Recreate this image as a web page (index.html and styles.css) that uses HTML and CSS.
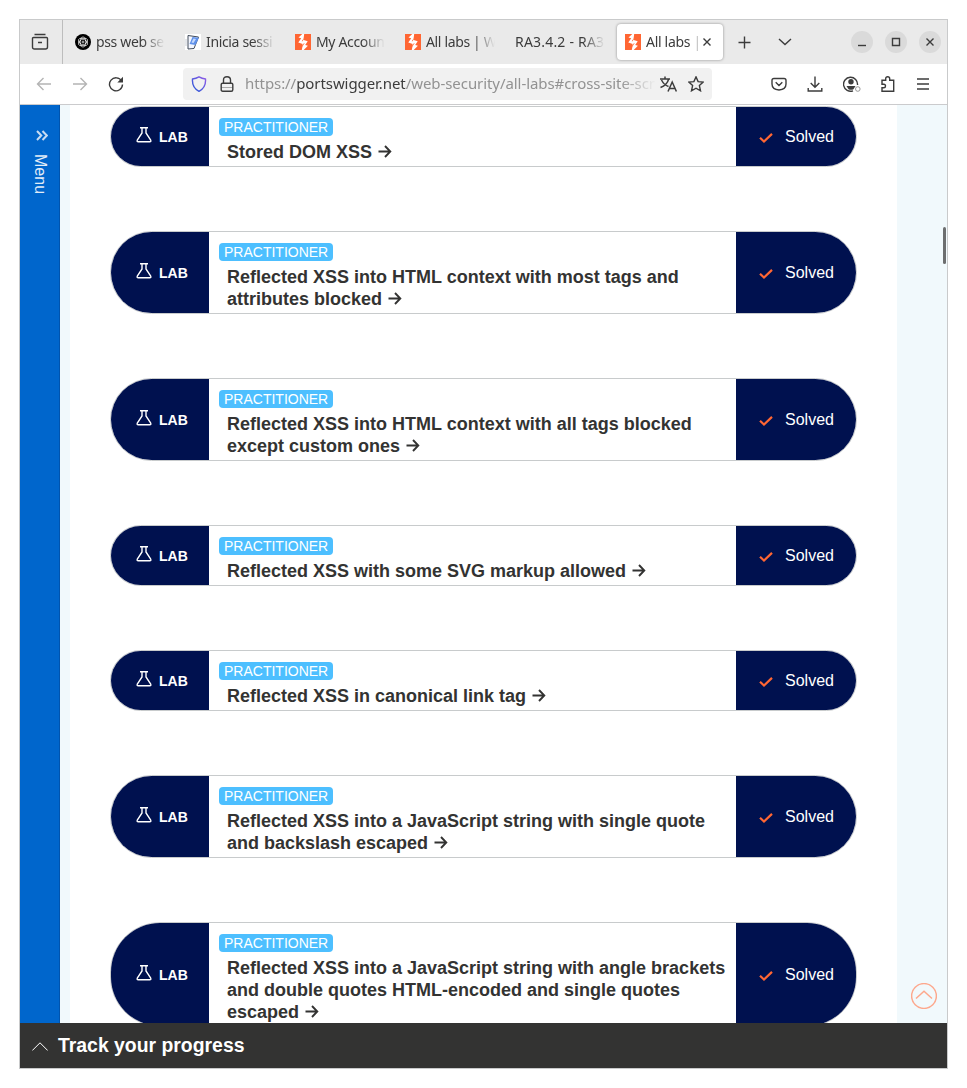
FILE: index.html
```html
<!DOCTYPE html>
<html lang="en">
<head>
<meta charset="utf-8">
<title>All labs | Web Security Academy</title>
<link rel="stylesheet" href="styles.css">
</head>
<body>
<svg class="sprite" aria-hidden="true">
  <symbol id="bolt" viewBox="0 0 16 16"><path fill="#ff6633" d="M0 0h16v16H0z"/><path fill="#fff" d="M7.300 0H9.200L8.600 4.400 6.700 7.300 9.600 8.200 6.900 12 7.700 9.900 3.300 8.600 6.200 4.200 3.500 3.600zM8.700 16H6.800l.6-3.200 2.200-3.700L7 8.200l2.200-3.800-.5 1.700 4 1.200-2.500 3.700 2.700.7z"/></symbol>
  <symbol id="flask" viewBox="0 0 16 16"><path d="M4 .8h8M6 .8v5.200L1.300 13.200q-.7 1.600 1 1.600h11.400q1.700 0 1-1.600L10 6V.8" fill="none" stroke="currentColor" stroke-width="1.400"/></symbol>
  <symbol id="check" viewBox="0 0 14 12"><path d="M1 5.800 5 9.600 13 1.900" fill="none" stroke="currentColor" stroke-width="2.200"/></symbol>
  <symbol id="arrow" viewBox="0 0 14 14"><path d="M.5 6.500H12M7 1 12.300 6.500 7 12" fill="none" stroke="currentColor" stroke-width="1.900"/></symbol>
</svg>
<div class="window">
  <header class="tabbar">
    <div class="view"><svg width="18" height="18" viewBox="0 0 18 18"><path d="M3.500 1.500h11M2.500 4.500h13q1 0 1 1v8.500q0 2-2 2h-11q-2 0-2-2V5.500q0-1 1-1zM7 9.500h4"/></svg></div>
    <nav class="tabs">
      <div class="tab"><svg class="fav" viewBox="0 0 16 16"><circle cx="8" cy="8" r="8" fill="#000"/><g fill="none" stroke="#fff" stroke-width=".7"><ellipse cx="8" cy="8" rx="2.800" ry="5"/><ellipse cx="8" cy="8" rx="2.800" ry="5" transform="rotate(60 8 8)"/><ellipse cx="8" cy="8" rx="2.800" ry="5" transform="rotate(120 8 8)"/><circle cx="8" cy="8" r="1"/></g></svg><span class="label">pss web se</span></div>
      <div class="tab"><svg class="fav" viewBox="0 0 16 16"><path fill="#fff" d="M0 0h16v16H0z"/><path d="M3 1.500 13.500 3 9 14.500 3 15z" fill="#f4f7ff" stroke="#414b5a" stroke-width="1"/><path d="M7.500 3 14 3.800 10.500 11 4.500 10z" fill="#5f91ea"/><path d="M8.500 4.500 11 5 8.500 9 6.500 8.500z" fill="#c6dafd"/><path d="M1 5v7" stroke="#c9ced6"/></svg><span class="label">Inicia sessi</span></div>
      <div class="tab"><svg class="fav"><use href="#bolt"/></svg><span class="label">My Accoun</span></div>
      <div class="tab"><svg class="fav"><use href="#bolt"/></svg><span class="label">All labs | W</span></div>
      <div class="tab wide"><span class="label">RA3.4.2 - RA3</span></div>
      <div class="tab active"><svg class="fav"><use href="#bolt"/></svg><span class="label">All labs |</span><svg class="close" width="8" height="8" viewBox="0 0 8 8"><path d="m.5.5 7 7m0-7-7 7"/></svg></div>
    </nav>
    <svg class="plus" width="13" height="13" viewBox="0 0 13 13"><path d="M6.500.5v12M.5 6.500h12"/></svg>
    <svg class="down" width="14" height="8" viewBox="0 0 14 8"><path d="m1 1 6 5.500L13 1"/></svg>
    <div class="controls">
      <span><svg viewBox="0 0 22 22"><path d="M7 14.500h8"/></svg></span>
      <span><svg viewBox="0 0 22 22"><path d="M7.500 7.500h7v7h-7z"/></svg></span>
      <span><svg viewBox="0 0 22 22"><path d="m7.500 7.500 7 7m0-7-7 7"/></svg></span>
    </div>
  </header>
  <div class="toolbar">
    <div class="history">
      <svg class="dim" width="16" height="16" viewBox="0 0 16 16"><path d="M15 8H1.500m6-6-6 6 6 6"/></svg>
      <svg class="dim" width="16" height="16" viewBox="0 0 16 16"><path d="M1 8h13.500m-6-6 6 6-6 6"/></svg>
      <svg width="16" height="16" viewBox="0 0 16 16"><path d="M13.600 5A6.500 6.500 0 1 0 14.500 8.500"/><path d="M15 .8v5.700H9.300z" fill="#3c3c3c" stroke="none"/></svg>
    </div>
    <div class="urlbar">
      <svg width="16" height="16" viewBox="0 0 16 16"><defs><linearGradient id="sh" x1="0" y1="1" x2="1" y2="0"><stop stop-color="#2457d6"/><stop offset="1" stop-color="#925be8"/></linearGradient></defs><path stroke="url(#sh)" d="M8 .8Q11 2.500 14.500 3 15.200 11.500 8 15.300.8 11.500 1.500 3 5 2.500 8 .8z"/></svg>
      <svg class="lock" width="14" height="16" viewBox="0 0 14 16"><path d="M3.500 7V4q0-3.300 3.500-3.300T10.500 4v3M2.500 7.200h9q1.300 0 1.300 1.300v5.200q0 1.500-1.500 1.500H2.700q-1.500 0-1.500-1.500V8.500q0-1.300 1.300-1.300z"/><path class="hair" d="M1.500 11.500h11"/></svg>
      <div class="url">https://<b>portswigger.net</b>/web-security/all-labs#cross-site-scr</div>
      <svg width="17" height="16" viewBox="0 0 17 16"><path stroke-width="1.500" d="M0 3h10M5 .5V3M1.500 4Q4 9 8.500 10.500M8.500 3.500Q7 9 .5 11.500M8 15.500 12.200 6l4.200 9.500M9.500 12.500h5.500"/></svg>
      <svg class="star" width="16" height="16" viewBox="0 0 16 16"><path d="m8 .9 2.100 4.700 5.100.5-3.800 3.500 1.100 5.200L8 12.200l-4.500 2.600 1.100-5.200L.8 6.100l5.100-.5z"/></svg>
    </div>
    <div class="actions">
      <svg viewBox="0 0 16 16"><path d="M3 2.500h10q2 0 2 2V8q0 5.500-7 6-7-.5-7-6V4.500q0-2 2-2zM4.700 6.300 8 9.500l3.300-3.200"/></svg>
      <svg viewBox="0 0 16 16"><path d="M8 .5V11M3.700 7 8 11.200 12.300 7M1.200 12v3h13.600v-3"/></svg>
      <svg viewBox="0 0 18 16"><path d="M14.500 9a7 7 0 1 0-4.500 5.800"/><circle cx="8" cy="5.800" r="2.700" fill="#3c3c3c" stroke="none"/><path d="M3.500 10h9l-2 3.200q-2.500 1-5 0z" fill="#3c3c3c" stroke="none"/><circle cx="14.800" cy="13" r="2.300" stroke="#999" stroke-width="1"/></svg>
      <svg viewBox="0 0 16 16"><path d="M2 4.200h3.700V2.800q0-2 2-2t2 2v1.400h4v11H2v-3.400h1.800q1.700 0 1.700-1.800T3.800 8.200H2z"/></svg>
      <svg viewBox="0 0 16 16"><path d="M2 3h12M2 8h12M2 13h12"/></svg>
    </div>
  </div>
  <main class="page">
    <aside class="menu"><svg width="12" height="11" viewBox="0 0 12 11"><path d="m1 1 4.300 4.500L1 10m5.500-9 4.300 4.500L6.500 10"/></svg><span>Menu</span></aside>
    <section class="labs">
      <article class="lab"><div class="kind"><svg><use href="#flask"/></svg>LAB</div><div class="info"><span class="level">PRACTITIONER</span><h2>Stored DOM XSS <svg><use href="#arrow"/></svg></h2></div><div class="status"><svg><use href="#check"/></svg>Solved</div></article>
      <article class="lab"><div class="kind"><svg><use href="#flask"/></svg>LAB</div><div class="info"><span class="level">PRACTITIONER</span><h2>Reflected XSS into HTML context with most tags and<br>attributes blocked <svg><use href="#arrow"/></svg></h2></div><div class="status"><svg><use href="#check"/></svg>Solved</div></article>
      <article class="lab"><div class="kind"><svg><use href="#flask"/></svg>LAB</div><div class="info"><span class="level">PRACTITIONER</span><h2>Reflected XSS into HTML context with all tags blocked<br>except custom ones <svg><use href="#arrow"/></svg></h2></div><div class="status"><svg><use href="#check"/></svg>Solved</div></article>
      <article class="lab"><div class="kind"><svg><use href="#flask"/></svg>LAB</div><div class="info"><span class="level">PRACTITIONER</span><h2>Reflected XSS with some SVG markup allowed <svg><use href="#arrow"/></svg></h2></div><div class="status"><svg><use href="#check"/></svg>Solved</div></article>
      <article class="lab"><div class="kind"><svg><use href="#flask"/></svg>LAB</div><div class="info"><span class="level">PRACTITIONER</span><h2>Reflected XSS in canonical link tag <svg><use href="#arrow"/></svg></h2></div><div class="status"><svg><use href="#check"/></svg>Solved</div></article>
      <article class="lab"><div class="kind"><svg><use href="#flask"/></svg>LAB</div><div class="info"><span class="level">PRACTITIONER</span><h2>Reflected XSS into a JavaScript string with single quote<br>and backslash escaped <svg><use href="#arrow"/></svg></h2></div><div class="status"><svg><use href="#check"/></svg>Solved</div></article>
      <article class="lab"><div class="kind"><svg><use href="#flask"/></svg>LAB</div><div class="info"><span class="level">PRACTITIONER</span><h2>Reflected XSS into a JavaScript string with angle brackets<br>and double quotes HTML-encoded and single quotes<br>escaped <svg><use href="#arrow"/></svg></h2></div><div class="status"><svg><use href="#check"/></svg>Solved</div></article>
    </section>
    <div class="scroll-thumb"></div>
    <svg class="to-top" viewBox="0 0 26 26"><circle cx="13" cy="13" r="12.400"/><path d="m5 15.500 8-7.200 8 7.200"/></svg>
  </main>
  <footer class="progress"><svg width="16" height="9" viewBox="0 0 16 9"><path d="M.3 8.500 8 .8l7.700 7.700"/></svg>Track your progress</footer>
</div>
</body>
</html>
```
FILE: styles.css
```css
* { box-sizing: border-box; }
body { margin: 0; padding: 19px; background: #fff; font-family: "Liberation Sans", Arial, sans-serif; }
.sprite { position: absolute; width: 0; height: 0; }
svg { flex: none; display: block; }
.window { display: flex; flex-direction: column; width: 929px; height: 1050px; border: 1px solid #c9cacb; }

.tabbar { display: flex; align-items: center; height: 44px; background: #eaeaea; font-family: "Noto Sans", sans-serif; color: #3c3c3c; }
.tabbar svg:not(.fav), .toolbar svg { fill: none; stroke: #3c3c3c; stroke-width: 1.4; }
.view { display: flex; align-items: center; padding: 0 13px 0 11px; height: 44px; border-right: 1px solid #bdbdbd; }
.tabs { display: flex; gap: 4px; margin-left: 4px; }
.tab { display: flex; align-items: center; gap: 5px; width: 106px; height: 36px; padding: 0 8px; border-radius: 4px; }
.fav { width: 16px; height: 16px; }
.label { flex: 1; min-width: 0; overflow: hidden; white-space: nowrap; font-size: 14px; letter-spacing: -0.35px; line-height: 20px; -webkit-mask-image: linear-gradient(to left, transparent, #000 22px); mask-image: linear-gradient(to left, transparent, #000 22px); }
.wide .label { letter-spacing: 0.2px; }
.active { background: #fff; box-shadow: 0 0 3px rgba(0, 0, 0, .4); }
.active .label { flex: 0 0 55px; letter-spacing: -0.3px; -webkit-mask-image: linear-gradient(to left, transparent, #000 11px); mask-image: linear-gradient(to left, transparent, #000 11px); }
.active .close { margin-left: -3px; }
.plus { margin-left: 15px; }
.down { margin-left: 27px; }
.controls { display: flex; gap: 12px; margin-left: 59px; }
.controls span { width: 22px; height: 22px; border-radius: 50%; background: #dadada; }
.controls svg { width: 22px; height: 22px; }

.toolbar { display: flex; align-items: center; height: 41px; border-bottom: 1px solid #cbcbcd; background: #fff; }
.history { display: flex; gap: 20px; padding-left: 16px; }
.toolbar .dim { stroke: #b4b4b4; }
.urlbar { display: flex; align-items: center; width: 529px; height: 32px; margin-left: 59px; padding: 0 8px; border-radius: 4px; background: #f1f1f1; }
.lock { margin-left: 13px; }
.toolbar .hair { stroke-width: .8; opacity: .5; }
.url { width: 411px; margin: -2px 4px 0 11px; overflow: hidden; white-space: nowrap; color: #929292; font: 15px/20px "Noto Sans", sans-serif; letter-spacing: -0.07px; -webkit-mask-image: linear-gradient(to left, transparent, #000 36px); mask-image: linear-gradient(to left, transparent, #000 36px); }
.url b { font-weight: 400; color: #3c3c3c; }
.star { margin-left: 11px; }
.actions { display: flex; gap: 20px; margin-left: 59px; }
.actions svg { width: 16px; height: 16px; }
.actions svg:nth-child(3) { width: 18px; margin-right: -2px; }
.actions svg:nth-child(4) { margin-left: 1px; margin-right: -1px; }

.page { position: relative; display: flex; flex: 1; min-height: 0; overflow: hidden; background: #f1f9fc; }
.menu { display: flex; flex-direction: column; align-items: center; width: 40px; padding: 25px 0 0 4px; background: #0066cc; border-right: 1px solid #0054ae; color: #e3edf8; }
.menu svg { fill: none; stroke: #c9dcf1; stroke-width: 2; }
.menu span { margin-top: 13px; writing-mode: vertical-rl; font-size: 16px; line-height: 18px; margin-right: 4px; }
.labs { display: flex; flex-direction: column; gap: 64px; width: 827px; flex: none; margin-left: 10px; padding: 1px 40px 0; background: #fff; }
.lab { display: flex; flex: none; border: 1px solid #c8cbcc; border-radius: 50px; overflow: hidden; }
.kind { display: flex; align-items: center; width: 98px; padding: 1px 0 0 25px; background: #00114f; color: #fff; font-size: 14px; font-weight: 700; }
.kind svg { width: 16px; height: 16px; margin: -4px 7px 0 0; }
.info { flex: 1; padding: 11px 10px 3px; }
.level { display: block; width: 114px; height: 18px; padding-left: 5px; border-radius: 4px; background: #4dbfff; color: #fff; font-size: 14px; line-height: 18px; }
h2 { margin: 5px 0 0 8px; font-size: 18px; line-height: 22px; font-weight: 700; color: #333332; white-space: nowrap; }
h2 svg { display: inline-block; width: 14px; height: 14px; vertical-align: -1px; margin-left: 1px; }
.status { display: flex; align-items: center; width: 120px; padding-left: 23px; background: #00114f; color: #fff; font-size: 16px; }
.status svg { width: 14px; height: 12px; margin: 2px 12px 0 0; color: #ff6633; }
.scroll-thumb { position: absolute; top: 122px; right: 1px; width: 3px; height: 37px; border-radius: 2px; background: #6d6e6f; }
.to-top { position: absolute; right: 10px; bottom: 14px; width: 26px; height: 26px; fill: none; stroke: #fda88d; stroke-width: 1.5; }
.progress { display: flex; align-items: center; gap: 10px; height: 45px; padding-left: 12px; background: #333332; color: #fff; font-size: 19.4px; font-weight: 700; }
.progress svg { fill: none; stroke: #fff; stroke-width: 1; margin-top: 1px; }
```
